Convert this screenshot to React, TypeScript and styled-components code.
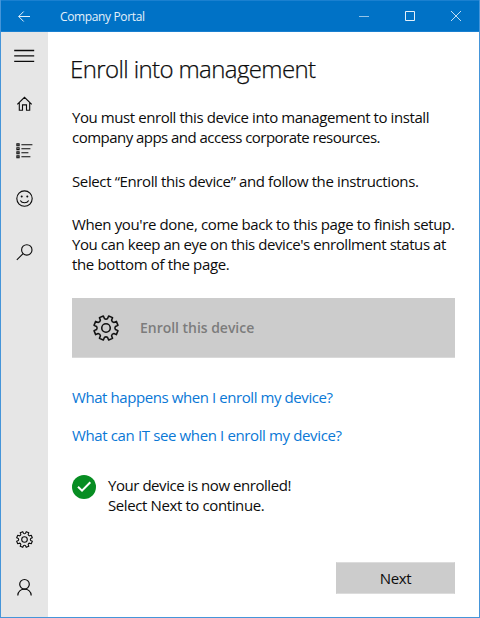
import React from 'react';
import styled, { createGlobalStyle } from 'styled-components';

const GlobalStyle = createGlobalStyle`
  *, *::before, *::after { box-sizing: border-box; }
  body { margin: 0; background: #fff; }
  button { font: inherit; border: 0; padding: 0; background: none; color: inherit; }
`;

const Window = styled.div`
  display: flex;
  flex-direction: column;
  width: 480px;
  height: 618px;
  border: 1px solid #4595d9;
  border-top: 0;
  background: #fff;
  color: #0c0c0c;
  font-family: 'Open Sans', 'Noto Sans', sans-serif;
  font-size: 15px;
  line-height: 20px;
  overflow: hidden;
`;

const TitleBar = styled.header`
  display: flex;
  align-items: center;
  flex: none;
  height: 32px;
  margin: 0 -1px;
  border: 1px solid #1a80d0;
  border-width: 1px 1px 1px 0;
  background: #0072c6;
  color: #e3f0fa;
`;

const BackButton = styled.button`
  display: grid;
  place-items: center;
  width: 48px;
  height: 30px;
`;

const AppName = styled.span<{ $tracking: number }>`
  flex: 1;
  padding: 1px 0 0 12px;
  font-size: 12px;
  letter-spacing: ${(p) => p.$tracking}px;
`;

const CaptionButton = styled.button`
  display: grid;
  place-items: center;
  width: 46px;
  height: 30px;
`;

const Body = styled.div`
  display: flex;
  flex: 1;
  min-height: 0;
`;

const Sidebar = styled.nav`
  display: flex;
  flex-direction: column;
  justify-content: space-between;
  flex: none;
  width: 47px;
  padding-bottom: 6px;
  background: #e6e6e6;
`;

const NavGroup = styled.div`
  display: flex;
  flex-direction: column;
`;

const NavButton = styled.button<{ $before?: number }>`
  display: grid;
  place-items: center;
  width: 47px;
  height: 48px;
  margin-top: ${(p) => p.$before ?? 0}px;
`;

const Page = styled.main`
  display: flex;
  flex-direction: column;
  align-items: flex-start;
  flex: 1;
  padding: 21px 24px 23px 24px;
`;

const Line = styled.span<{ $tracking: number }>`
  display: block;
  white-space: nowrap;
  letter-spacing: ${(p) => p.$tracking}px;
`;

const Heading = styled.h1`
  margin: 0 0 22px -2px;
  font-size: 24px;
  font-weight: 300;
  line-height: 32px;
  -webkit-text-stroke: 0.25px currentColor;
`;

const Paragraph = styled.p<{ $after: number }>`
  margin: 0 0 ${(p) => p.$after}px;
`;

const EnrollButton = styled.button`
  display: flex;
  align-items: center;
  gap: 21px;
  align-self: stretch;
  height: 60px;
  margin-bottom: 29px;
  padding-left: 21px;
  border-bottom: 1px solid #d9d9d9;
  background: #ccc;
  color: #111;
`;

const EnrollLabel = styled.span<{ $tracking: number }>`
  color: #7c7c7c;
  font-size: 14px;
  font-weight: 600;
  letter-spacing: ${(p) => p.$tracking}px;
`;

const HelpLink = styled.a<{ $after: number }>`
  margin-bottom: ${(p) => p.$after}px;
  color: #0a78d6;
  text-decoration: none;
`;

const Status = styled.div`
  display: flex;
  gap: 12px;
`;

const StatusText = styled.div`
  display: flex;
  flex-direction: column;
`;

const NextButton = styled.button`
  display: grid;
  place-items: center;
  align-self: flex-end;
  width: 119px;
  height: 32px;
  margin-top: auto;
  border: 1px solid #dcdcdc;
  border-left-color: #ccc;
  border-right-color: #ccc;
  background: #ccc;
`;

const Glyph = styled.svg`
  display: block;
  fill: none;
  stroke: currentColor;
  overflow: visible;
`;

const polar = (radius: number, degrees: number) => {
  const a = (degrees * Math.PI) / 180;
  return `${(radius * Math.cos(a)).toFixed(2)} ${(radius * Math.sin(a)).toFixed(2)}`;
};

/* Eight teeth, each a flat outer edge separated by a rounded notch. */
const gearPath =
  Array.from({ length: 8 }, (_, i) => {
    const c = i * 45 + 22.5;
    return `${i ? 'L' : 'M'}${polar(9.2, c - 13)}L${polar(11.8, c - 10)}L${polar(11.8, c + 10)}L${polar(9.2, c + 13)}Q${polar(8, c + 22.5)} ${polar(9.2, c + 32)}`;
  }).join('') + 'Z';

const Gear = ({ size, weight }: { size: number; weight: number }) => (
  <Glyph width={size} height={size} viewBox="-12.5 -12.5 25 25" strokeWidth={weight} strokeLinejoin="round">
    <path d={gearPath} />
    <circle r="4.1" />
  </Glyph>
);

const BackIcon = () => (
  <Glyph width="12" height="11" viewBox="0 0 12 11">
    <path d="M.7 5.5H12M5.7.5l-5 5 5 5" />
  </Glyph>
);

const MinimizeIcon = () => (
  <Glyph width="10" height="10" viewBox="0 0 10 10" opacity=".65">
    <path d="M0 5.5h10" />
  </Glyph>
);

const MaximizeIcon = () => (
  <Glyph width="10" height="10" viewBox="0 0 10 10">
    <path d="M.5.5h9v9h-9z" />
  </Glyph>
);

const CloseIcon = () => (
  <Glyph width="10" height="10" viewBox="0 0 10 10" opacity=".85">
    <path d="M0 0l10 10M10 0L0 10" />
  </Glyph>
);

const MenuIcon = () => (
  <Glyph width="21" height="14" viewBox="0 0 21 14" strokeWidth="1.3">
    <path d="M.2 1.5h20M.2 6.9h20M.2 12.3h20" />
  </Glyph>
);

const HomeIcon = () => (
  <Glyph width="17" height="16" viewBox="0 0 17 16" strokeWidth="1.1">
    <path d="M1.3 8.3l7.2-7 7.2 7M3.3 6.6v7.6h3.2V8.9h4v5.3h3.2V6.6" />
  </Glyph>
);

const ListIcon = () => (
  <Glyph width="17" height="16" viewBox="0 0 17 16" strokeWidth="1.1">
    <path d="M5.4 1.7h11M5.4 5.7h9M5.4 9.8h7M5.4 13.8h9" />
    <path d="M.9.9h2.2v1.8H.9zM.9 4.8h2.2v1.8H.9zM.9 8.9h2.2v1.8H.9zM.9 12.9h2.2v1.8H.9z" />
  </Glyph>
);

const SmileIcon = () => (
  <Glyph width="17" height="18" viewBox="0 0 17 18" strokeWidth="1.1">
    <circle cx="8.5" cy="8.6" r="7.7" />
    <path d="M4.3 10.4c1.7 3.1 6.7 3.1 8.4 0" />
    <circle cx="5.7" cy="6.5" r="1" fill="currentColor" stroke="none" />
    <circle cx="11.3" cy="6.5" r="1" fill="currentColor" stroke="none" />
  </Glyph>
);

const SearchIcon = () => (
  <Glyph width="17" height="17" viewBox="0 0 17 17" strokeWidth="1.1">
    <circle cx="10.8" cy="5.9" r="5.2" />
    <path d="M7.1 9.6L.8 15.9" />
  </Glyph>
);

const PersonIcon = () => (
  <Glyph width="15" height="17" viewBox="0 0 15 17" strokeWidth="1.2">
    <circle cx="7.5" cy="5.3" r="4.8" />
    <path d="M.8 16.5c.5-8.5 12.9-8.5 13.4 0" />
  </Glyph>
);

const CheckIcon = () => (
  <Glyph width="24" height="24" viewBox="0 0 24 24">
    <circle cx="12" cy="12" r="12" fill="#078d22" stroke="none" />
    <path d="M6 11.8l4 3.9 8.3-8.5" stroke="#fff" strokeWidth="2" />
  </Glyph>
);

export default function App() {
  return (
    <>
      <GlobalStyle />
      <Window>
        <TitleBar>
          <BackButton aria-label="Back"><BackIcon /></BackButton>
          <AppName $tracking={-0.36}>Company Portal</AppName>
          <CaptionButton aria-label="Minimize"><MinimizeIcon /></CaptionButton>
          <CaptionButton aria-label="Maximize"><MaximizeIcon /></CaptionButton>
          <CaptionButton aria-label="Close"><CloseIcon /></CaptionButton>
        </TitleBar>
        <Body>
          <Sidebar>
            <NavGroup>
              <NavButton aria-label="Menu"><MenuIcon /></NavButton>
              <NavButton aria-label="Home"><HomeIcon /></NavButton>
              <NavButton aria-label="Apps" $before={-1}><ListIcon /></NavButton>
              <NavButton aria-label="Feedback"><SmileIcon /></NavButton>
              <NavButton aria-label="Search" $before={5}><SearchIcon /></NavButton>
            </NavGroup>
            <NavGroup>
              <NavButton aria-label="Settings"><Gear size={17} weight={1.6} /></NavButton>
              <NavButton aria-label="Account"><PersonIcon /></NavButton>
            </NavGroup>
          </Sidebar>
          <Page>
            <Heading><Line $tracking={-0.61}>Enroll into management</Line></Heading>
            <Paragraph $after={24}>
              <Line $tracking={-0.425}>You must enroll this device into management to install</Line>
              <Line $tracking={-0.53}>company apps and access corporate resources.</Line>
            </Paragraph>
            <Paragraph $after={23}>
              <Line $tracking={-0.38}>Select “Enroll this device” and follow the instructions.</Line>
            </Paragraph>
            <Paragraph $after={24}>
              <Line $tracking={-0.373}>When you're done, come back to this page to finish setup.</Line>
              <Line $tracking={-0.425}>You can keep an eye on this device's enrollment status at</Line>
              <Line $tracking={-0.35}>the bottom of the page.</Line>
            </Paragraph>
            <EnrollButton disabled>
              <Gear size={26} weight={1.5} />
              <EnrollLabel $tracking={-0.03}>Enroll this device</EnrollLabel>
            </EnrollButton>
            <HelpLink $after={18}><Line $tracking={-0.42}>What happens when I enroll my device?</Line></HelpLink>
            <HelpLink $after={30}><Line $tracking={-0.37}>What can IT see when I enroll my device?</Line></HelpLink>
            <Status>
              <CheckIcon />
              <StatusText>
                <Line $tracking={-0.45}>Your device is now enrolled!</Line>
                <Line $tracking={-0.39}>Select Next to continue.</Line>
              </StatusText>
            </Status>
            <NextButton><Line $tracking={-0.3}>Next</Line></NextButton>
          </Page>
        </Body>
      </Window>
    </>
  );
}
